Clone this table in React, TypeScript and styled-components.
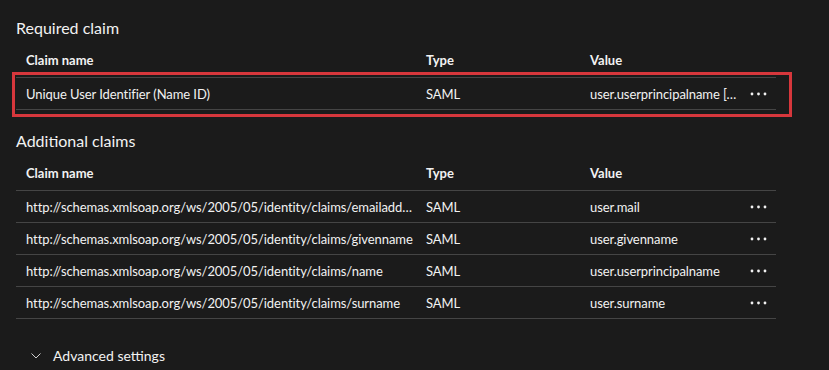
import React from "react";
import styled, { createGlobalStyle } from "styled-components";

type Claim = { name: string; type: string; value: string };

const required: Claim = {
  name: "Unique User Identifier (Name ID)",
  type: "SAML",
  value: "user.userprincipalname [nameid-format:emailAddress]",
};

const additional: Claim[] = [
  { name: "http://schemas.xmlsoap.org/ws/2005/05/identity/claims/emailaddress", type: "SAML", value: "user.mail" },
  { name: "http://schemas.xmlsoap.org/ws/2005/05/identity/claims/givenname", type: "SAML", value: "user.givenname" },
  { name: "http://schemas.xmlsoap.org/ws/2005/05/identity/claims/name", type: "SAML", value: "user.userprincipalname" },
  { name: "http://schemas.xmlsoap.org/ws/2005/05/identity/claims/surname", type: "SAML", value: "user.surname" },
];

const Global = createGlobalStyle`
  html, body {
    margin: 0;
    background: #1b1b1b;
  }
  body {
    font-family: Lato, "Noto Sans", sans-serif;
    color: #f2f2f2;
  }
`;

const Page = styled.div`
  width: 829px;
  height: 370px;
  padding: 18px 0 0 16px;
  box-sizing: border-box;
  background: #1b1b1b;
  overflow: hidden;
`;

const SectionTitle = styled.h2<{ $gap?: number }>`
  margin: ${(p) => p.$gap ?? 0}px 0 0;
  font-size: 16px;
  line-height: 20px;
  font-weight: 400;
  color: #f2f2f2;
`;

const Grid = styled.div`
  display: grid;
  grid-template-columns: 400px 164px 160px 36px;
  width: 760px;
`;

const HeaderRow = styled(Grid)`
  height: 39px;
  padding-top: 14px;
  box-sizing: border-box;
  font-size: 13px;
  line-height: 16px;
  font-weight: 700;
`;

const Row = styled(Grid)<{ $last?: boolean }>`
  height: ${(p) => (p.$last ? 33 : 32)}px;
  box-sizing: border-box;
  border-top: 1px solid #454545;
  border-bottom: ${(p) => (p.$last ? "1px solid #454545" : "0")};
  align-items: center;
  font-size: 13px;
  line-height: 16px;
  letter-spacing: -0.07px;
`;

const Cell = styled.div`
  padding-left: 10px;
  white-space: nowrap;
  overflow: hidden;
  text-overflow: ellipsis;
`;

const Highlight = styled.div`
  position: relative;
  width: 760px;
  &::after {
    content: "";
    position: absolute;
    top: -5px;
    left: -4px;
    right: -16px;
    bottom: -7px;
    border: 3px solid #d7373c;
    pointer-events: none;
  }
`;

const More = styled.button`
  display: flex;
  align-items: center;
  justify-content: center;
  background: none;
  border: 0;
  padding: 0;
  height: 24px;
  color: #f2f2f2;
  cursor: pointer;
`;

const Advanced = styled.div`
  display: flex;
  align-items: center;
  gap: 12px;
  margin-top: 27px;
  padding-left: 15px;
  font-size: 14px;
  line-height: 20px;
  color: #f2f2f2;
`;

const Dots = () => (
  <More aria-label="More options">
    <svg width="17" height="4" viewBox="0 0 17 4">
      <circle cx="2" cy="2" r="1.4" fill="currentColor" />
      <circle cx="8.5" cy="2" r="1.4" fill="currentColor" />
      <circle cx="15" cy="2" r="1.4" fill="currentColor" />
    </svg>
  </More>
);

const Header = () => (
  <HeaderRow>
    <Cell>Claim name</Cell>
    <Cell>Type</Cell>
    <Cell>Value</Cell>
    <div />
  </HeaderRow>
);

const ClaimRow = ({ claim, last }: { claim: Claim; last?: boolean }) => (
  <Row $last={last}>
    <Cell>{claim.name}</Cell>
    <Cell>{claim.type}</Cell>
    <Cell>{claim.value}</Cell>
    <Dots />
  </Row>
);

export default function App() {
  return (
    <Page>
      <Global />
      <SectionTitle>Required claim</SectionTitle>
      <Header />
      <Highlight>
        <ClaimRow claim={required} last />
      </Highlight>

      <SectionTitle $gap={21}>Additional claims</SectionTitle>
      <Header />
      {additional.map((c, i) => (
        <ClaimRow key={c.name} claim={c} last={i === additional.length - 1} />
      ))}

      <Advanced>
        <svg width="10" height="6" viewBox="0 0 10 6">
          <path d="M0.5 0.5 L5 5 L9.5 0.5" fill="none" stroke="#cfcfcf" strokeWidth="1" />
        </svg>
        Advanced settings
      </Advanced>
    </Page>
  );
}
